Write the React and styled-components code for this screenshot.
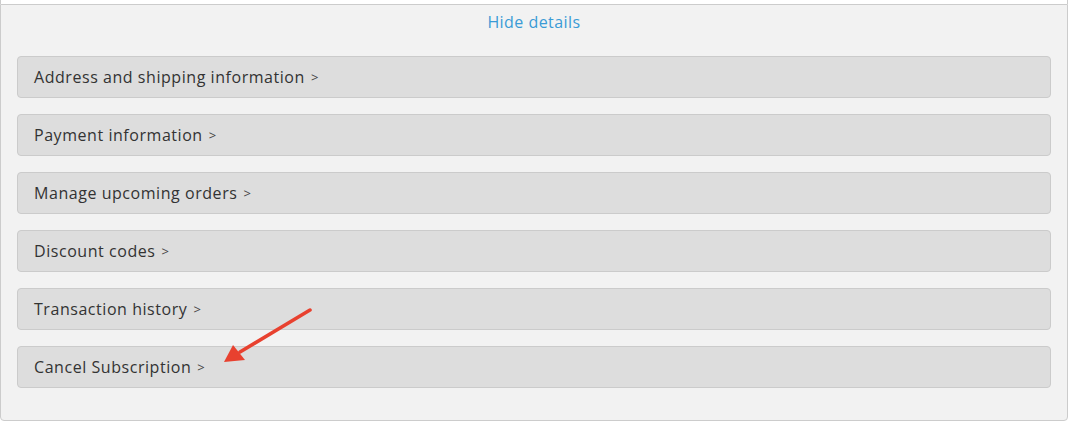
import React from 'react'
import styled, { createGlobalStyle } from 'styled-components'

const GlobalStyle = createGlobalStyle`
  body {
    margin: 0;
    background: #ffffff;
    font-family: 'Open Sans', 'Liberation Sans', sans-serif;
  }
`

const items = [
  'Address and shipping information',
  'Payment information',
  'Manage upcoming orders',
  'Discount codes',
  'Transaction history',
  'Cancel Subscription',
]

const App = () => {
  return (
    <Page>
      <GlobalStyle />
      <TopStrip />
      <Panel>
        <HideLink href='#'>Hide details</HideLink>
        <List>
          {items.map((label) => (
            <Item key={label}>
              {label}
              <Chevron>&gt;</Chevron>
            </Item>
          ))}
        </List>
      </Panel>
      <Arrow width='100' height='70' viewBox='0 0 100 70'>
        <line x1='90' y1='3' x2='20' y2='45' stroke='#e8412f' strokeWidth='3.5' strokeLinecap='round' />
        <polygon points='4,55 13,38 25,53' fill='#e8412f' />
      </Arrow>
    </Page>
  )
}

const Page = styled.div`
  position: relative;
  width: 1068px;
  height: 422px;
`

const TopStrip = styled.div`
  height: 4px;
  border-left: 1px solid #cccccc;
  border-right: 1px solid #cccccc;
  background: #ffffff;
`

const Panel = styled.div`
  background: #f2f2f2;
  border: 1px solid #cccccc;
  border-radius: 0 0 4px 4px;
  padding: 5px 16px 32px;
  display: flex;
  flex-direction: column;
  align-items: center;
`

const HideLink = styled.a`
  color: #3a9bd6;
  text-decoration: none;
  font-size: 16px;
  line-height: 24px;
  letter-spacing: 0.45px;
  margin-bottom: 22px;
`

const List = styled.div`
  width: 100%;
  display: flex;
  flex-direction: column;
  gap: 16px;
`

const Item = styled.div`
  height: 42px;
  box-sizing: border-box;
  background: #dddddd;
  border: 1px solid #cbcbcb;
  border-radius: 4px;
  padding: 0 16px 1px;
  display: flex;
  align-items: center;
  color: #333333;
  font-size: 16px;
  letter-spacing: 0.55px;
`

const Chevron = styled.span`
  margin-left: 6px;
  font-size: 13px;
  color: #444444;
`

const Arrow = styled.svg`
  position: absolute;
  left: 220px;
  top: 307px;
`

export default App
